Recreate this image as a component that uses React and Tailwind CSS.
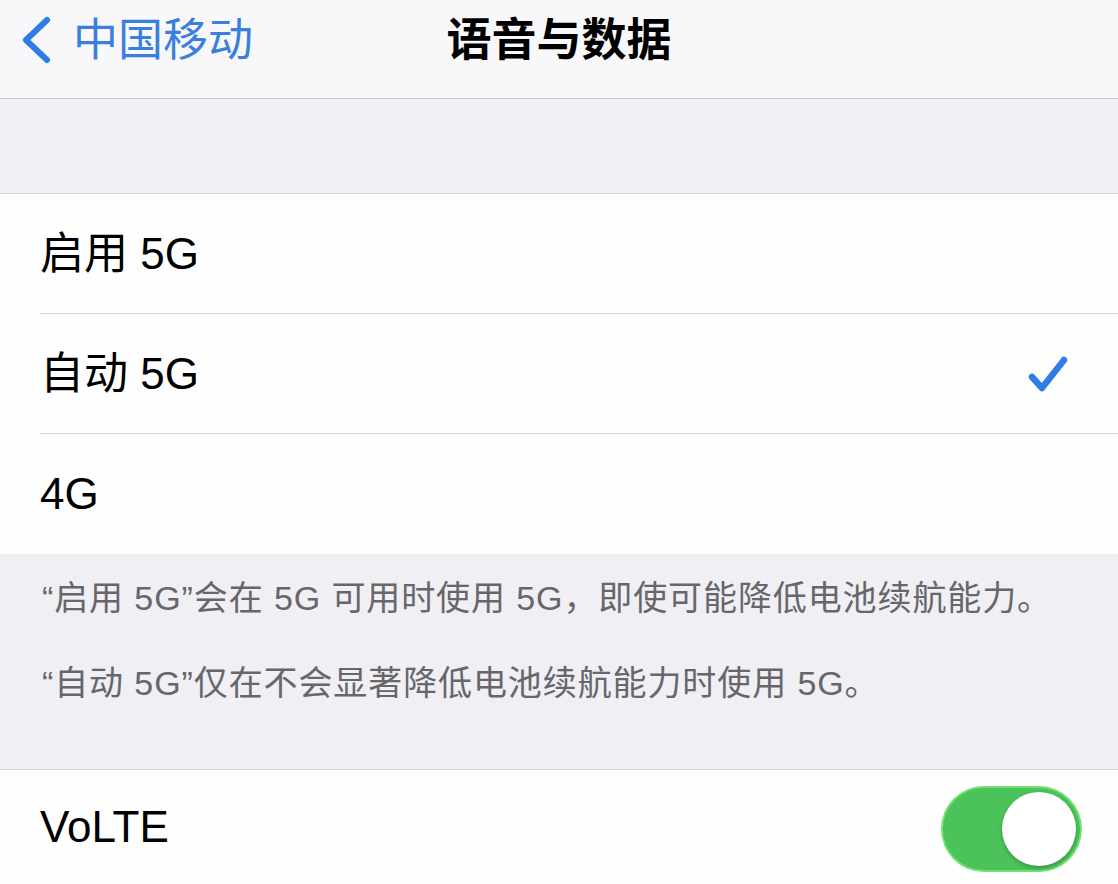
import React from "react";

const font = { fontFamily: '"Liberation Sans", "Noto Sans CJK SC", sans-serif' };

function Row({ label, checked, last }) {
  return (
    <div className="h-[120px] bg-[#fefeff] pl-[40px] flex">
      <div className={`flex-1 flex items-center pr-[48px] ${last ? "" : "border-b border-[#d3d3d8]"}`}>
        <span className="flex-1 text-[44px] text-black leading-none">{label}</span>
        {checked && (
          <svg width="44" height="42" viewBox="0 0 44 42">
            <path d="M6 24 L16 35 L38 7" fill="none" stroke="#2f7ce6" strokeWidth="6.5" strokeLinecap="round" strokeLinejoin="round" />
          </svg>
        )}
      </div>
    </div>
  );
}

export default function App() {
  return (
    <div className="w-[1118px] h-[884px] overflow-hidden bg-[#efeff4] flex flex-col" style={font}>
      <div className="h-[99px] bg-[#f8f8fa] border-b border-[#c9c9ce] grid grid-cols-[1fr_auto_1fr] items-start pt-[14px] shrink-0">
        <div className="flex items-center pl-[18px] h-[52px]">
          <svg width="34" height="50" viewBox="0 0 34 50">
            <path d="M29 5 L8 25 L29 45" fill="none" stroke="#2f7ce6" strokeWidth="6" strokeLinecap="round" strokeLinejoin="round" />
          </svg>
          <span className="ml-[21px] text-[45px] text-[#3a7fe0] leading-none">中国移动</span>
        </div>
        <div className="h-[52px] flex items-center text-[45px] font-bold text-black leading-none">语音与数据</div>
        <div />
      </div>
      <div className="h-[95px] border-b border-[#d3d3d8] shrink-0" />
      <Row label="启用 5G" />
      <Row label="自动 5G" checked />
      <Row label="4G" last />
      <div className="h-[216px] shrink-0 pl-[42px] pt-[24px] text-[34px] leading-[40px] tracking-[0.9px] text-[#66666b] border-b border-[#d3d3d8]">
        <p>“启用 5G”会在 5G 可用时使用 5G，即使可能降低电池续航能力。</p>
        <p className="mt-[45px]">“自动 5G”仅在不会显著降低电池续航能力时使用 5G。</p>
      </div>
      <div className="flex-1 bg-[#fefeff] pl-[40px] pr-[38px] flex items-center">
        <span className="flex-1 text-[44px] text-black leading-none">VoLTE</span>
        <div className="w-[137px] h-[82px] mt-[3px] rounded-full bg-[#4cc35a] ring-2 ring-[#6fe26f] flex items-center justify-end pr-[4px]">
          <div className="w-[74px] h-[74px] rounded-full bg-white shadow-[0_2px_4px_rgba(0,0,0,0.25)]" />
        </div>
      </div>
    </div>
  );
}
